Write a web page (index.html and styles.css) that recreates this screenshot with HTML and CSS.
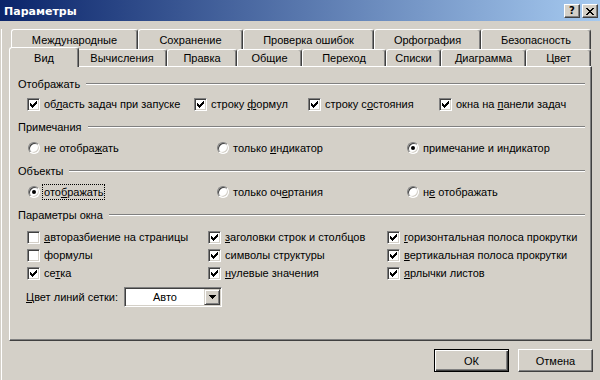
FILE: index.html
```html
<!DOCTYPE html>
<html lang="ru">
<head>
<meta charset="UTF-8"/>
<title>Параметры</title>
<link rel="stylesheet" href="styles.css">
</head>
<body>
<div class="titlebar">
  <span class="title">Параметры</span>
  <span class="tbtns">
    <span class="tbtn">?</span>
    <span class="tbtn"><svg width="8" height="7" viewBox="0 0 8 7" shape-rendering="crispEdges"><path d="M0 0h2v1h-2zM6 0h2v1h-2zM1 1h2v1h-2zM5 1h2v1h-2zM2 2h4v1h-4zM3 3h2v1h-2zM2 4h4v1h-4zM1 5h2v1h-2zM5 5h2v1h-2zM0 6h2v1h-2zM6 6h2v1h-2z"/></svg></span>
  </span>
</div>
<div class="client">
  <div class="tabrow back">
    <div class="tab">Международные</div>
    <div class="tab">Сохранение</div>
    <div class="tab">Проверка ошибок</div>
    <div class="tab">Орфография</div>
    <div class="tab">Безопасность</div>
  </div>
  <div class="tabrow front">
    <div class="tab active">Вид</div>
    <div class="tab">Вычисления</div>
    <div class="tab">Правка</div>
    <div class="tab">Общие</div>
    <div class="tab">Переход</div>
    <div class="tab">Списки</div>
    <div class="tab">Диаграмма</div>
    <div class="tab">Цвет</div>
  </div>
  <div class="panel">
    <div class="ghead first">Отображать</div>
    <div class="row top">
      <div class="opt"><span class="cb"><svg width="11" height="11" viewBox="1 1 11 11" shape-rendering="crispEdges"><path d="M9 3h1v1h-1zM8 4h2v1h-2zM3 5h1v1h-1zM7 5h3v1h-3zM3 6h2v1h-2zM6 6h3v1h-3zM3 7h5v1h-5zM4 8h3v1h-3zM5 9h1v1h-1z"/></svg></span><span class="lbl">об<u>л</u>асть задач при запуске</span></div>
      <div class="opt"><span class="cb"><svg width="11" height="11" viewBox="1 1 11 11" shape-rendering="crispEdges"><path d="M9 3h1v1h-1zM8 4h2v1h-2zM3 5h1v1h-1zM7 5h3v1h-3zM3 6h2v1h-2zM6 6h3v1h-3zM3 7h5v1h-5zM4 8h3v1h-3zM5 9h1v1h-1z"/></svg></span><span class="lbl">строку <u>ф</u>ормул</span></div>
      <div class="opt"><span class="cb"><svg width="11" height="11" viewBox="1 1 11 11" shape-rendering="crispEdges"><path d="M9 3h1v1h-1zM8 4h2v1h-2zM3 5h1v1h-1zM7 5h3v1h-3zM3 6h2v1h-2zM6 6h3v1h-3zM3 7h5v1h-5zM4 8h3v1h-3zM5 9h1v1h-1z"/></svg></span><span class="lbl">строку с<u>о</u>стояния</span></div>
      <div class="opt"><span class="cb"><svg width="11" height="11" viewBox="1 1 11 11" shape-rendering="crispEdges"><path d="M9 3h1v1h-1zM8 4h2v1h-2zM3 5h1v1h-1zM7 5h3v1h-3zM3 6h2v1h-2zM6 6h3v1h-3zM3 7h5v1h-5zM4 8h3v1h-3zM5 9h1v1h-1z"/></svg></span><span class="lbl">окна на <u>п</u>анели задач</span></div>
    </div>

    <div class="ghead">Примечания</div>
    <div class="row radios">
      <div class="opt"><span class="rb"></span><span class="lbl">не отобра<u>ж</u>ать</span></div>
      <div class="opt"><span class="rb"></span><span class="lbl">только <u>и</u>ндикатор</span></div>
      <div class="opt"><span class="rb on"></span><span class="lbl">примечание и индикатор</span></div>
    </div>

    <div class="ghead">Объекты</div>
    <div class="row radios">
      <div class="opt"><span class="rb on"></span><span class="lbl focus">ото<u>б</u>ражать</span></div>
      <div class="opt"><span class="rb"></span><span class="lbl">только оч<u>е</u>ртания</span></div>
      <div class="opt"><span class="rb"></span><span class="lbl">н<u>е</u> отображать</span></div>
    </div>

    <div class="ghead">Параметры окна</div>
    <div class="row win first">
      <div class="opt"><span class="cb"></span><span class="lbl"><u>а</u>вторазбиение на страницы</span></div>
      <div class="opt"><span class="cb"><svg width="11" height="11" viewBox="1 1 11 11" shape-rendering="crispEdges"><path d="M9 3h1v1h-1zM8 4h2v1h-2zM3 5h1v1h-1zM7 5h3v1h-3zM3 6h2v1h-2zM6 6h3v1h-3zM3 7h5v1h-5zM4 8h3v1h-3zM5 9h1v1h-1z"/></svg></span><span class="lbl"><u>з</u>аголовки строк и столбцов</span></div>
      <div class="opt"><span class="cb"><svg width="11" height="11" viewBox="1 1 11 11" shape-rendering="crispEdges"><path d="M9 3h1v1h-1zM8 4h2v1h-2zM3 5h1v1h-1zM7 5h3v1h-3zM3 6h2v1h-2zM6 6h3v1h-3zM3 7h5v1h-5zM4 8h3v1h-3zM5 9h1v1h-1z"/></svg></span><span class="lbl"><u>г</u>оризонтальная полоса прокрутки</span></div>
    </div>
    <div class="row win">
      <div class="opt"><span class="cb"></span><span class="lbl">формулы</span></div>
      <div class="opt"><span class="cb"><svg width="11" height="11" viewBox="1 1 11 11" shape-rendering="crispEdges"><path d="M9 3h1v1h-1zM8 4h2v1h-2zM3 5h1v1h-1zM7 5h3v1h-3zM3 6h2v1h-2zM6 6h3v1h-3zM3 7h5v1h-5zM4 8h3v1h-3zM5 9h1v1h-1z"/></svg></span><span class="lbl">символы структуры</span></div>
      <div class="opt"><span class="cb"><svg width="11" height="11" viewBox="1 1 11 11" shape-rendering="crispEdges"><path d="M9 3h1v1h-1zM8 4h2v1h-2zM3 5h1v1h-1zM7 5h3v1h-3zM3 6h2v1h-2zM6 6h3v1h-3zM3 7h5v1h-5zM4 8h3v1h-3zM5 9h1v1h-1z"/></svg></span><span class="lbl"><u>в</u>ертикальная полоса прокрутки</span></div>
    </div>
    <div class="row win">
      <div class="opt"><span class="cb"><svg width="11" height="11" viewBox="1 1 11 11" shape-rendering="crispEdges"><path d="M9 3h1v1h-1zM8 4h2v1h-2zM3 5h1v1h-1zM7 5h3v1h-3zM3 6h2v1h-2zM6 6h3v1h-3zM3 7h5v1h-5zM4 8h3v1h-3zM5 9h1v1h-1z"/></svg></span><span class="lbl">се<u>т</u>ка</span></div>
      <div class="opt"><span class="cb"><svg width="11" height="11" viewBox="1 1 11 11" shape-rendering="crispEdges"><path d="M9 3h1v1h-1zM8 4h2v1h-2zM3 5h1v1h-1zM7 5h3v1h-3zM3 6h2v1h-2zM6 6h3v1h-3zM3 7h5v1h-5zM4 8h3v1h-3zM5 9h1v1h-1z"/></svg></span><span class="lbl"><u>н</u>улевые значения</span></div>
      <div class="opt"><span class="cb"><svg width="11" height="11" viewBox="1 1 11 11" shape-rendering="crispEdges"><path d="M9 3h1v1h-1zM8 4h2v1h-2zM3 5h1v1h-1zM7 5h3v1h-3zM3 6h2v1h-2zM6 6h3v1h-3zM3 7h5v1h-5zM4 8h3v1h-3zM5 9h1v1h-1z"/></svg></span><span class="lbl"><u>я</u>рлычки листов</span></div>
    </div>

    <div class="row color">
      <span class="clabel"><u>Ц</u>вет линий сетки:</span>
      <div class="combo">
        <span class="val">Авто</span>
        <span class="ddbtn"><svg width="7" height="4" viewBox="0 0 7 4" shape-rendering="crispEdges"><path d="M0 0h7v1h-7zM1 1h5v1h-5zM2 2h3v1h-3zM3 3h1v1h-1z"/></svg></span>
      </div>
    </div>
  </div>
  <div class="footer">
    <span class="btn default">ОК</span>
    <span class="btn">Отмена</span>
  </div>
</div>
</body>
</html>
```

FILE: styles.css
```css
body{margin:0;width:600px;height:380px;overflow:hidden;background:#d4d0c8;font-family:"Liberation Sans",Arial,sans-serif;font-size:11px;color:#000;}
u{text-decoration:underline;text-underline-offset:1px;}

/* caption */
.titlebar{height:21px;box-sizing:border-box;display:flex;align-items:center;justify-content:space-between;padding:1px 2px 0 4px;background:linear-gradient(to right,#0a246a,#a6caf0);}
.title{color:#fff;font-family:"DejaVu Sans",sans-serif;font-weight:bold;font-size:11px;}
.tbtns{display:flex;gap:2px;}
.tbtn{width:16px;height:14px;box-sizing:border-box;background:#d4d0c8;border:1px solid;border-color:#fff #404040 #404040 #fff;box-shadow:inset -1px -1px #808080;display:flex;align-items:center;justify-content:center;font-family:"DejaVu Sans",sans-serif;font-weight:bold;font-size:10px;line-height:1;}

.client{margin-left:1px;border-left:1px solid #fff;height:359px;}

/* tabs */
.tabrow{display:grid;margin-left:9px;width:580px;}
.tabrow.back{grid-template-columns:127px 105px 131px 107px 110px;height:20px;margin-top:8px;}
.tabrow.front{grid-template-columns:66px 90px 70px 65px 84px 55px 85px 65px;height:17px;}
.tab{background:#d4d0c8;border:1px solid;border-bottom:0;border-color:#fff #404040 #fff #fff;border-radius:3px 3px 0 0;box-shadow:inset -1px 0 #808080;display:flex;align-items:center;justify-content:center;white-space:nowrap;}
.tab.active{margin:-2px -2px -1px;position:relative;z-index:1;}

/* page */
.panel{margin-left:7px;width:583px;height:275px;box-sizing:border-box;border:1px solid;border-color:#fff #404040 #404040 #fff;box-shadow:inset -1px -1px #808080;padding:10px 6px 0 0;}
.ghead{display:flex;align-items:center;height:14px;padding-left:8px;margin-top:6px;}
.ghead.first{margin-top:0;}
.ghead::after{content:"";flex:1;margin-left:6px;border-top:1px solid #808080;border-bottom:1px solid #fff;}

.row{display:grid;align-items:center;height:20px;}
.row.top{grid-template-columns:167px 114px 131px auto;padding-left:17px;margin-top:3px;}
.row.radios{grid-template-columns:189px 190px auto;padding-left:18px;margin-top:4px;}
.row.win{grid-template-columns:181px 179px auto;padding-left:17px;height:18px;}
.row.win.first{margin-top:6px;}
.row.color{grid-template-columns:98px 98px;padding-left:16px;margin-top:5px;}

.opt{display:flex;align-items:center;white-space:nowrap;}
.lbl{margin-left:2px;padding:0 1px;border:1px solid transparent;line-height:14px;}
.lbl.focus{border:1px dotted #000;}

.cb{flex:none;width:13px;height:13px;box-sizing:border-box;background:#fff;border:1px solid;border-color:#808080 #fff #fff #808080;box-shadow:inset 1px 1px #404040,inset -1px -1px #d4d0c8;}
.cb svg{display:block;}
.rb{flex:none;width:12px;height:12px;box-sizing:border-box;border-radius:50%;background:#fff;border:1px solid;border-color:#808080 #fff #fff #808080;box-shadow:inset 1px 1px #404040,inset -1px -1px #d4d0c8;display:flex;align-items:center;justify-content:center;}
.rb.on::after{content:"";width:4px;height:4px;border-radius:50%;background:#000;}

.clabel{white-space:nowrap;}
.combo{height:20px;box-sizing:border-box;display:flex;padding:1px;background:#fff;border:1px solid;border-color:#808080 #fff #fff #808080;box-shadow:inset 1px 1px #404040,inset -1px -1px #d4d0c8;}
.combo .val{flex:1;text-align:center;line-height:16px;}
.ddbtn{width:16px;height:16px;box-sizing:border-box;background:#d4d0c8;border:1px solid;border-color:#d4d0c8 #404040 #404040 #d4d0c8;box-shadow:inset 1px 1px #fff,inset -1px -1px #808080;display:flex;align-items:center;justify-content:center;}
.ddbtn svg{display:block;}

/* buttons */
.footer{display:flex;justify-content:flex-end;gap:9px;padding-right:7px;margin-top:8px;}
.btn{width:75px;height:23px;box-sizing:border-box;display:flex;align-items:center;justify-content:center;background:#d4d0c8;border:1px solid;border-color:#fff #404040 #404040 #fff;box-shadow:inset -1px -1px #808080;}
.btn.default{border-color:#000;box-shadow:inset 1px 1px #fff,inset -1px -1px #404040,inset -2px -2px #808080;}
```
